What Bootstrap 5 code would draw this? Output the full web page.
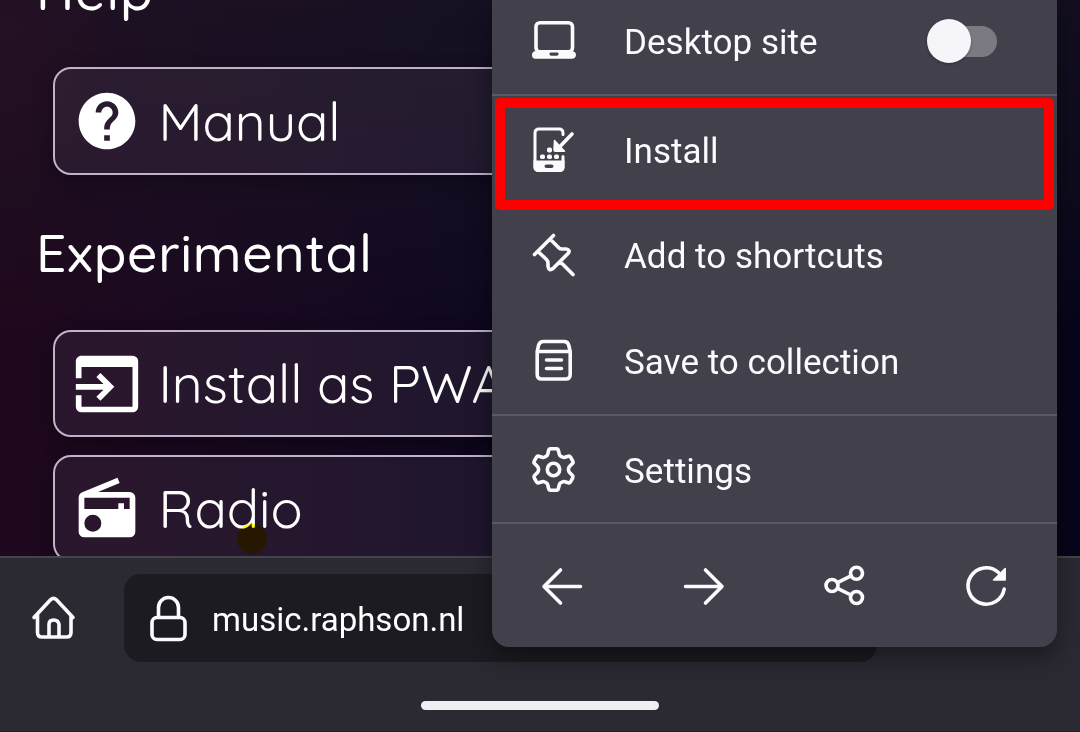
<!DOCTYPE html>
<html lang="en">
<head>
<meta charset="utf-8">
<meta name="viewport" content="width=device-width, initial-scale=1">
<title>music.raphson.nl</title>
<link href="https://cdn.jsdelivr.net/npm/bootstrap@5.3.0/dist/css/bootstrap.min.css" rel="stylesheet">
<style>
  body { width: 1080px; height: 732px; color: #fff; background: #2b2a33; font-family: Roboto, sans-serif; }
  svg { display: block; flex: none; overflow: visible; }
  .line-icon { fill: none; stroke: #fbfbfe; stroke-width: 3.6; stroke-linecap: round; stroke-linejoin: round; }

  .web-page {
    height: 556px; font-family: Quicksand, Lato, sans-serif;
    background:
      radial-gradient(ellipse 130px 150px at 0 50px, rgba(50,18,34,.3), transparent),
      linear-gradient(180deg, rgba(30,24,38,.5) 0, rgba(30,24,38,.28) 190px, transparent 330px),
      linear-gradient(90deg, #1f081d 0, #1a0920 170px, #16091f 300px, #0f081f 480px, #07051a 1080px);
  }
  .page-title { font-size: 53.3px; font-weight: 500; line-height: 64px; margin: 0 0 0 36px; white-space: nowrap; letter-spacing: .7px; }
  .title-help { margin-top: -42px; }
  .title-exp { margin-top: 44.5px; margin-bottom: 1.5px; }
  .page-btn {
    height: 107px; margin: 45px 60px 0 53px; padding-left: 18px; border: 2px solid #c0b2cb; border-radius: 18px;
    background: rgba(105,90,110,.18); box-shadow: 0 5px 18px rgba(0,0,0,.35);
    font-size: 53.3px; font-weight: 400; white-space: nowrap; line-height: 1;
  }
  .btn-manual { height: 108px; }
  .btn-manual span { padding-top: 2px; }
  .btn-next { margin-top: 18px; }
  .page-btn svg { fill: #fff; }
  .page-btn span { margin-left: 17.5px; }
  .touch-dot { left: 237px; top: 524px; width: 30px; height: 30px; background: #ff0; mix-blend-mode: multiply; }

  .toolbar-area { height: 176px; border-top: 2px solid #45434c; border-bottom: 1px solid #222128; background: #2b2a33; }
  .home-btn { width: 124px; padding: 14px 0 0 31px; }
  .url-box { width: 753px; height: 88px; margin-top: 16px; border-radius: 17px; background: #1c1b21; padding-left: 25px; }
  .url-box svg { margin-top: -1px; }
  .url-text { font-size: 33px; margin: 3px 0 0 25px; }
  .gesture-bar { width: 238px; height: 9px; margin: 39px 0 0 421px; background: #efeef2; }

  .browser-menu { left: 492px; top: 0; width: 565px; height: 647px; border-radius: 0 0 17px 17px; background: #42404b; box-shadow: 0 10px 26px rgba(0,0,0,.42); font-size: 35px; color: #fbfbfe; }
  .menu-row { height: 105.33px; padding-left: 38.5px; }
  .menu-row svg { margin-right: 48.5px; }
  .menu-label { padding-top: 3px; letter-spacing: .03px; }
  .menu-rule { height: 2px; background: #5b5966; }
  .menu-rule-gap { margin-bottom: 2px; }
  .row-desktop { height: 84px; margin-bottom: 10px; padding-right: 60.5px; }
  .row-desktop svg, .row-shortcut svg, .row-save svg { margin-top: -2px; }
  .row-desktop .menu-label { padding-top: 2px; }
  .row-install svg { margin-top: -4px; }
  .row-settings { height: 106px; }
  .row-settings .menu-label { padding-top: 7px; }
  .nav-icons { height: 124px; }
  .toggle-pill { width: 71px; height: 44px; }
  .toggle-pill::before { content: ""; position: absolute; right: 0; top: 6px; width: 60px; height: 31px; border-radius: 16px; background: #7b7982; }
  .toggle-pill::after { content: ""; position: absolute; left: 1px; top: -1px; width: 44px; height: 44px; border-radius: 50%; background: #f6f5fa; box-shadow: 0 1px 3px rgba(0,0,0,.3); }
  .red-frame { left: 3px; top: 98px; width: 559px; height: 112px; border: 10px solid #f00; border-radius: 5px; }
</style>
</head>
<body class="position-relative overflow-hidden">

<main class="web-page overflow-hidden">
  <div class="d-flex flex-column">
    <h2 class="page-title title-help">Help</h2>
    <div class="page-btn btn-manual d-flex align-items-center">
      <svg width="68" height="68" viewBox="0 0 24 24"><path d="M12 2C6.48 2 2 6.48 2 12s4.48 10 10 10 10-4.480 10-10S17.520 2 12 2zm1 17h-2v-2h2v2zm2.070-7.750l-.9.920C13.450 12.900 13 13.500 13 15h-2v-.5c0-1.100.450-2.100 1.170-2.830l1.240-1.260c.370-.360.590-.860.590-1.410 0-1.100-.9-2-2-2s-2 .9-2 2H8c0-2.210 1.790-4 4-4s4 1.790 4 4c0 .880-.360 1.680-.930 2.250z"/></svg>
      <span>Manual</span>
    </div>
    <h2 class="page-title title-exp">Experimental</h2>
    <div class="page-btn d-flex align-items-center">
      <svg width="68" height="68" viewBox="0 0 24 24"><path d="M1 12H10.760L8.260 9.500L9.670 8.080L14.590 13L9.670 17.920L8.260 16.500L10.760 14H1V12M21 2H3C1.890 2 1 2.890 1 4V10H3V6H21V20H3V16H1V20A2 2 0 0 0 3 22H21A2 2 0 0 0 23 20V4A2 2 0 0 0 21 2"/></svg>
      <span>Install as PWA</span>
    </div>
    <div class="page-btn btn-next d-flex align-items-center">
      <svg width="68" height="68" viewBox="0 0 24 24"><path d="M20 6A2 2 0 0 1 22 8V20A2 2 0 0 1 20 22H4A2 2 0 0 1 2 20V8C2 7.150 2.530 6.420 3.280 6.130L15.710 1L16.470 2.830L8.830 6H20M20 8H4V12H16V10H18V12H20V8M7 14A3 3 0 0 0 4 17A3 3 0 0 0 7 20A3 3 0 0 0 10 17A3 3 0 0 0 7 14Z"/></svg>
      <span>Radio</span>
    </div>
  </div>
</main>
<div class="touch-dot position-absolute rounded-circle"></div>

<footer class="toolbar-area">
  <div class="d-flex">
    <div class="home-btn d-flex align-items-center">
      <svg class="line-icon" width="44" height="44" viewBox="0 0 44 44"><path d="M3 22.500L19.500 4.800Q22.500 2 25.500 4.800L42 22.500M6.500 20V37.500Q6.500 42 11 42H35.500Q40 42 40 37.500V20M18 41.500V29.500Q18 25 22.700 25T28 29.500V41.500"/></svg>
    </div>
    <div class="url-box d-flex align-items-center">
      <svg class="line-icon" width="38" height="46" viewBox="0 0 38 46"><rect x="3" y="22.500" width="33" height="22" rx="5"/><path d="M9.500 22V12.500a10 10 0 0 1 20 0V22"/></svg>
      <span class="url-text">music.raphson.nl</span>
    </div>
  </div>
  <div class="gesture-bar rounded-pill"></div>
</footer>

<aside class="browser-menu position-absolute">
  <div class="menu-row row-desktop d-flex align-items-center">
    <svg class="line-icon" width="45" height="44" viewBox="0 0 45 44"><rect x="5" y="3.700" width="36.500" height="29" rx="4"/><path fill="#fbfbfe" stroke="none" fill-rule="evenodd" d="M4.500 32H41Q45 32.500 45 36Q44.500 39.800 41 39.800H4.500Q1 39.800 1 36Q1 32.500 4.500 32ZM20 33.500Q18.500 33.700 18.500 35T20 36.500H26Q27.500 36.300 27.500 35T26 33.500Z"/><path d="M20 35H26" stroke="#42404b" stroke-width="2.800"/></svg>
    <span class="menu-label">Desktop site</span>
    <span class="toggle-pill position-relative ms-auto"></span>
  </div>
  <div class="menu-rule menu-rule-gap"></div>
  <div class="menu-row row-install d-flex align-items-center">
    <svg class="line-icon" width="45" height="46" viewBox="0 0 45 46"><path d="M32 8.500V7Q32 3 28 3H8Q4 3 4 7V41Q4 44.500 8 44.500H28Q32 44.500 32 41V30.500" stroke-width="3"/><path fill="#fbfbfe" stroke="none" fill-rule="evenodd" d="M2.500 34.500H33.500V42Q33 46 28.500 46H7.500Q3 45.500 2.500 42ZM15.500 38.500Q13.500 38.500 13.500 40.200T15.500 42H20.500Q22.500 42 22.500 40.200T20.500 38.500Z"/><path d="M41 8L29.500 20"/><path fill="#fbfbfe" stroke-width="1.500" d="M23.500 14.500L33.500 25.300H24.500Q23 25.300 23 24Z"/><g fill="#fbfbfe" stroke="none"><rect x="16" y="21.500" width="5" height="5" rx="1.800"/><rect x="9" y="28.500" width="5" height="4.500" rx="1.800"/><rect x="16" y="28.500" width="5" height="4.500" rx="1.800"/><rect x="23" y="28.500" width="5" height="4.500" rx="1.800"/></g></svg>
    <span class="menu-label">Install</span>
  </div>
  <div class="menu-row row-shortcut d-flex align-items-center">
    <svg class="line-icon" width="45" height="44" viewBox="0 0 45 44"><path d="M3.500 21.500L22.500 2.500M20 7L28 15Q29 16 31 16H35Q40 17 37 20.500L22 35.500Q18 38.500 17 33.500V30.500Q17 28 15.500 26.500L7.500 19M29 28.500L42 41.500"/></svg>
    <span class="menu-label">Add to shortcuts</span>
  </div>
  <div class="menu-row row-save d-flex align-items-center">
    <svg class="line-icon" width="45" height="44" viewBox="0 0 45 44"><path d="M6.200 13.500Q7 10 7.500 7.500Q8.500 3.500 12.500 3.500H33Q37 3.500 37.800 7.500L39.200 13.500V36.500Q39.200 41 34.700 41H10.700Q6.200 41 6.200 36.500ZM6.500 13.500H39M15.500 22H30.500M15.500 30.500H30.500"/></svg>
    <span class="menu-label">Save to collection</span>
  </div>
  <div class="menu-rule"></div>
  <div class="menu-row row-settings d-flex align-items-center">
    <svg class="line-icon" width="45" height="46" viewBox="0 0 45 46"><circle cx="22.500" cy="23.500" r="6.200"/><path d="M19.500 2.800H25.500Q27 2.800 27.300 4.300L28.300 8.300Q28.700 9.700 30 10.300L31.300 11Q32.500 11.700 33.800 11.300L37.300 10.200Q38.700 9.800 39.500 11.100L41.800 15.200Q42.500 16.500 41.500 17.600L38.500 20.600Q37.500 21.600 37.500 23V24Q37.500 25.400 38.500 26.400L41.500 29.400Q42.500 30.500 41.800 31.800L39.500 35.900Q38.700 37.200 37.300 36.800L33.800 35.700Q32.500 35.300 31.300 36L30 36.700Q28.700 37.300 28.300 38.700L27.300 42.700Q27 44.200 25.500 44.200H19.500Q18 44.200 17.700 42.700L16.700 38.700Q16.300 37.300 15 36.700L13.700 36Q12.500 35.300 11.200 35.700L7.700 36.800Q6.300 37.200 5.500 35.900L3.200 31.800Q2.500 30.500 3.500 29.400L6.500 26.400Q7.500 25.400 7.500 24V23Q7.500 21.600 6.500 20.600L3.500 17.600Q2.500 16.500 3.200 15.200L5.500 11.100Q6.300 9.800 7.700 10.200L11.200 11.300Q12.500 11.700 13.700 11L15 10.300Q16.300 9.700 16.700 8.300L17.700 4.300Q18 2.800 19.500 2.800Z"/></svg>
    <span class="menu-label">Settings</span>
  </div>
  <div class="menu-rule"></div>
  <div class="nav-icons row g-0 align-items-center">
    <div class="col-3 d-flex justify-content-center"><svg class="line-icon" width="44" height="44" viewBox="0 0 44 44"><path d="M39.500 22.500H3.500M19.500 6L3 22.500L19.500 39"/></svg></div>
    <div class="col-3 d-flex justify-content-center"><svg class="line-icon" width="44" height="44" viewBox="0 0 44 44"><path d="M3.500 22.500H39.500M23.500 6L40 22.500L23.500 39"/></svg></div>
    <div class="col-3 d-flex justify-content-center"><svg class="line-icon" width="44" height="44" viewBox="0 0 44 44"><circle cx="9" cy="21.500" r="6"/><circle cx="33.500" cy="9.200" r="6"/><circle cx="33.500" cy="33.500" r="6"/><path d="M14.500 18.700L28 11.900M14.500 24.300L28 31"/></svg></div>
    <div class="col-3 d-flex justify-content-center"><svg class="line-icon" width="44" height="44" viewBox="0 0 44 44"><path d="M34.500 8.500A18.200 18.200 0 1 0 40.200 25"/><path fill="#fbfbfe" stroke-width="1.500" d="M41.200 4.500V16H29.500Z"/></svg></div>
  </div>
  <div class="red-frame position-absolute"></div>
</aside>

<script src="https://cdn.jsdelivr.net/npm/bootstrap@5.3.0/dist/js/bootstrap.bundle.min.js"></script>
</body>
</html>
